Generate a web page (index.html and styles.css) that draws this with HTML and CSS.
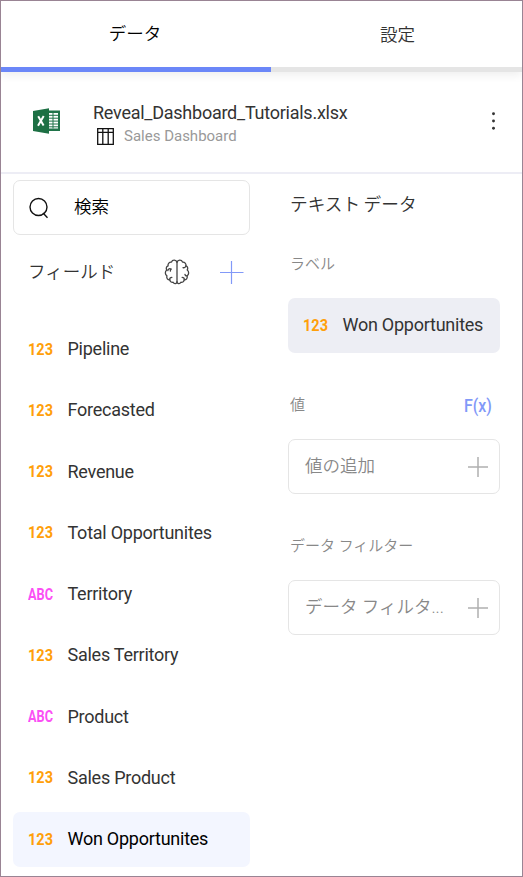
FILE: index.html
```
<!DOCTYPE html>
<html lang="ja">
<head>
<meta charset="utf-8">
<title>データ</title>
<link rel="stylesheet" href="styles.css">
</head>
<body>
<div class="editor">
  <nav class="tabs">
    <div class="tab active"><span>データ</span></div>
    <div class="tab"><span>設定</span></div>
  </nav>
  <header class="source">
    <svg class="excel" width="28" height="26" viewBox="0 0 28 26">
      <path d="M15 2.500h12v20.500H15z" fill="#20744a"/>
      <path d="M15 5h10v15.500H15z" fill="#fff"/>
      <path d="M15 5.500h4.500v2H15zM20.500 5.500H24v2h-3.500zM15 8.500h4.500v2H15zM20.500 8.500H24v2h-3.500zM15 11.500h4.500v2H15zM20.500 11.500H24v2h-3.500zM15 14.500h4.500v2H15zM20.500 14.500H24v2h-3.500zM15 17.500h4.500v2H15zM20.500 17.500H24v2h-3.500z" fill="#fff"/>
      <path d="M15 7.300h10M15 10.200h10M15 13.100h10M15 16h10M15 18.800h10M20 5v15.500" stroke="#20744a" stroke-width="1"/>
      <path d="M0 3 16 .3v25.400L0 23z" fill="#1d7044"/>
      <path d="M5.200 8.200 10.600 17.600M10.700 8 5 17.800" stroke="#fff" stroke-width="2" fill="none"/>
    </svg>
    <div class="source-text">
      <div class="file">Reveal_Dashboard_Tutorials.xlsx</div>
      <div class="sheet">
        <svg width="17" height="17" viewBox="0 0 17 17" fill="none" stroke="#111" stroke-width="1.300"><path d="M.7.700h15.600v15.600H.7zM.7 4.300h15.600M5.800.7v15.600M11.200.7v15.600"/></svg>
        <span>Sales Dashboard</span>
      </div>
    </div>
    <svg class="more" width="4" height="18" viewBox="0 0 4 18" fill="#333"><circle cx="1.500" cy="1.800" r="1.450"/><circle cx="1.500" cy="9" r="1.450"/><circle cx="1.500" cy="16.200" r="1.450"/></svg>
  </header>
  <main class="columns">
    <section class="fields">
      <div class="search">
        <svg width="20" height="22" viewBox="0 0 20 22" fill="none" stroke="#111" stroke-width="1.400"><circle cx="9.500" cy="10" r="8.500"/><path d="m14 16 4.500 4.800"/></svg>
        <span>検索</span>
      </div>
      <div class="fields-head">
        <span class="fields-title">フィールド</span>
        <svg class="brain" width="26" height="26" viewBox="0 0 26 26" fill="none" stroke="#444" stroke-width="1.300" stroke-linecap="round" stroke-linejoin="round">
          <path d="M13 3.400C12.300.6 8.500.4 7.500 3.100 5.300 2.800 3.600 4.700 4.100 6.900 2.200 7.600 1.800 9.600 2.800 11 .8 12.400.9 15.500 2.900 16.800 2.200 19.300 3.800 21 5.800 20.900 6.100 23 7.900 23.700 9.100 23.200 10.300 25.500 13 24.600 13 22.700Z"/>
          <path d="M3.800 11.500C4.200 9.700 5.800 9.200 7.300 10.100M6.700 10.200 6.300 12M5.800 20.900C5.400 19.200 6.500 18.300 7.900 18.300"/>
          <path d="M13 3.400C13.700.6 17.500.4 18.500 3.100 20.700 2.800 22.400 4.700 21.900 6.900 23.800 7.600 24.200 9.600 23.200 11 25.200 12.400 25.100 15.500 23.100 16.800 23.800 19.300 22.200 21 20.200 20.900 19.900 23 18.100 23.700 16.900 23.200 15.700 25.500 13 24.600 13 22.700"/>
          <path d="M21.900 6.900C21.500 8.500 20.100 9 19 8.600M20.200 20.900C20.600 19.200 19.500 18.300 18.100 18.300M23.100 16.800C22 17 21.200 16.400 21 15.500"/>
        </svg>
        <svg class="add" width="24" height="24" viewBox="0 0 24 24" stroke="#8299f8" stroke-width="1.200"><path d="M0 12.500h23.500M11.500 1v23"/></svg>
      </div>
      <div class="list">
        <div class="row"><b class="type num">123</b><span>Pipeline</span></div>
        <div class="row"><b class="type num">123</b><span>Forecasted</span></div>
        <div class="row"><b class="type num">123</b><span>Revenue</span></div>
        <div class="row"><b class="type num">123</b><span>Total Opportunites</span></div>
        <div class="row"><b class="type abc">ABC</b><span>Territory</span></div>
        <div class="row"><b class="type num">123</b><span>Sales Territory</span></div>
        <div class="row"><b class="type abc">ABC</b><span>Product</span></div>
        <div class="row"><b class="type num">123</b><span>Sales Product</span></div>
        <div class="row selected"><b class="type num">123</b><span>Won Opportunites</span></div>
      </div>
    </section>
    <section class="slots">
      <h2>テキスト データ</h2>
      <div class="label">ラベル</div>
      <div class="chip"><b class="type num">123</b><span>Won Opportunites</span></div>
      <div class="label value"><span>値</span><b class="fx">F(x)</b></div>
      <div class="drop"><span>値の追加</span><svg width="20" height="20" stroke="#b0b0b0" stroke-width="1.500"><path d="M0 10h20M10 0v20"/></svg></div>
      <div class="label filter">データ フィルター</div>
      <div class="drop"><span>データ フィルタ...</span><svg width="20" height="20" stroke="#b0b0b0" stroke-width="1.500"><path d="M0 10h20M10 0v20"/></svg></div>
    </section>
  </main>
</div>
</body>
</html>
```
FILE: styles.css
```
* { box-sizing: border-box; }
body {
  margin: 0;
  font-family: Roboto, "Noto Sans CJK JP", sans-serif;
  font-size: 18px;
  color: #333;
  background: #fff;
}
svg { display: block; flex: none; }
span { white-space: nowrap; }
.editor { height: 877px; border: 1px solid #998494; overflow: hidden; }
.tabs { display: flex; height: 71px; box-shadow: 0 3px 9px rgba(0, 0, 0, .07); }
.tab {
  flex: 1;
  display: flex;
  justify-content: center;
  border-bottom: 5px solid #e5e5e5;
  padding: 1px 0 0 2px;
  line-height: 66px;
  font-weight: 350;
  font-size: 17.5px;
}
.tab.active { flex: none; width: 270px; padding: 0 2px 0 0; border-color: #6b87f8; color: #000; }
.source {
  display: flex;
  height: 102px;
  border-bottom: 2px solid #ededf5;
  padding: 0 26px 0 32px;
}
.excel { margin-top: 36px; }
.source-text { margin-left: 32px; flex: 1; padding-top: 30px; }
.file { line-height: 22px; font-size: 18px; letter-spacing: -.25px; }
.sheet { display: flex; align-items: center; gap: 10px; margin-left: 4px; line-height: 24px; font-size: 15px; color: #999; }
.more { margin-top: 40px; }
.columns { display: flex; padding-left: 12px; }
.fields { width: 237px; padding-top: 6px; }
.search {
  display: flex;
  align-items: center;
  height: 55px;
  border: 1px solid #e5e5e5;
  border-radius: 7px;
  padding-left: 15px;
  gap: 25px;
  color: #000;
  font-size: 17.5px;
  font-weight: 350;
}
.search span { margin-top: -4px; }
.fields-head { display: flex; align-items: center; height: 74px; padding: 0 6px 0 15px; font-weight: 350; }
.fields-title { flex: 1; margin-top: -3px; font-size: 17.5px; }
.brain { margin-right: 30px; }
.list { display: grid; gap: 6.250px; padding-top: 13px; }
.row, .chip { display: flex; align-items: center; height: 55px; padding-left: 15px; gap: 13.500px; border-radius: 7px; }
.row span, .chip span { line-height: 22px; margin-top: -1px; letter-spacing: -.25px; }
.row.selected { background: #f3f6ff; color: #000; }
.type {
  flex: none;
  width: 26px;
  line-height: 22px;
  font-size: 16.5px;
  transform-origin: 0 50%;
}
.num { color: #ff9f0a; transform: scaleX(.88); }
.abc { color: #fb4ff5; transform: scaleX(.77); }
.slots { width: 212px; margin-left: 38px; padding-top: 16px; }
h2 { margin: 0 0 0 2px; line-height: 30px; font-size: 17.7px; font-weight: 350; word-spacing: -1px; }
.label { margin: 32px 0 21px 2px; line-height: 25px; font-size: 15px; font-weight: 350; color: #888; }
.chip { background: #edeef4; }
.value { display: flex; justify-content: space-between; margin: 40px 7px 21px 2px; }
.fx {
  width: 29px;
  font-size: 19px;
  font-weight: 500;
  color: #8299f8;
  transform: scaleX(.84);
  transform-origin: 0 50%;
}
.filter { margin-top: 40px; }
.drop {
  display: flex;
  align-items: center;
  justify-content: space-between;
  height: 55px;
  border: 1px solid #e5e5e5;
  border-radius: 7px;
  padding: 0 11px 0 16px;
  font-size: 17.5px;
  font-weight: 350;
  color: #888;
}
.drop span { margin-top: -5px; }
```
